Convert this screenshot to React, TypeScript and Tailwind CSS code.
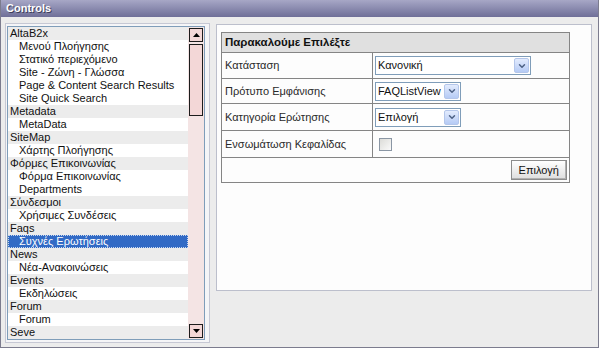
import { ChevronDown } from 'lucide-react'

type Item = { label: string; child?: boolean; selected?: boolean }

const items: Item[] = [
  { label: 'AltaB2x' },
  { label: 'Μενού Πλοήγησης', child: true },
  { label: 'Στατικό περιεχόμενο', child: true },
  { label: 'Site - Ζώνη - Γλώσσα', child: true },
  { label: 'Page & Content Search Results', child: true },
  { label: 'Site Quick Search', child: true },
  { label: 'Metadata' },
  { label: 'MetaData', child: true },
  { label: 'SiteMap' },
  { label: 'Χάρτης Πλοήγησης', child: true },
  { label: 'Φόρμες Επικοινωνίας' },
  { label: 'Φόρμα Επικοινωνίας', child: true },
  { label: 'Departments', child: true },
  { label: 'Σύνδεσμοι' },
  { label: 'Χρήσιμες Συνδέσεις', child: true },
  { label: 'Faqs' },
  { label: 'Συχνές Ερωτήσεις', child: true, selected: true },
  { label: 'News' },
  { label: 'Νέα-Ανακοινώσεις', child: true },
  { label: 'Events' },
  { label: 'Εκδηλώσεις', child: true },
  { label: 'Forum' },
  { label: 'Forum', child: true },
  { label: 'Seve' },
]

function ListRow({ item }: { item: Item }) {
  if (item.selected) {
    return (
      <div className="h-[13px] leading-[13px] bg-[#316ac5] text-white pl-[11px] outline outline-1 outline-dotted outline-offset-[-1px] outline-[#c8d8f0] whitespace-nowrap">
        {item.label}
      </div>
    )
  }
  return (
    <div
      className={
        item.child
          ? 'h-[13px] leading-[13px] bg-white pl-[11px] text-[#111] whitespace-nowrap'
          : 'h-[13px] leading-[13px] bg-[#ececec] pl-[2px] text-[#111] whitespace-nowrap'
      }
    >
      {item.label}
    </div>
  )
}

function ScrollArrow({ up }: { up?: boolean }) {
  return (
    <div className="h-[14px] w-[14px] border border-[#1c1c1c] bg-[#f3d7d7] flex items-center justify-center">
      <svg width="7" height="4" viewBox="0 0 7 4">
        {up ? <path d="M0 4 L3.5 0 L7 4 Z" fill="#000" /> : <path d="M0 0 L3.5 4 L7 0 Z" fill="#000" />}
      </svg>
    </div>
  )
}

function FakeSelect({ value, width }: { value: string; width: string }) {
  return (
    <div className={`${width} h-[19px] border border-[#7f9db9] bg-white flex items-center justify-between pl-[2px] pr-[1px]`}>
      <span className="text-[#111]">{value}</span>
      <div className="w-[15px] h-[15px] rounded-[2px] border border-[#b4c6ea] bg-gradient-to-b from-[#e3ebfd] to-[#b5cbf5] flex items-center justify-center">
        <ChevronDown size={10} strokeWidth={3.5} className="text-[#4d6185]" />
      </div>
    </div>
  )
}

export default function App() {
  return (
    <div className="w-[599px] h-[348px] bg-[#ececec] border-x border-b border-[#7c7c8e] flex flex-col font-['Liberation_Sans',Arial,sans-serif] text-[11px] overflow-hidden">
      {/* Title bar */}
      <div className="h-[17px] shrink-0 bg-gradient-to-b from-[#a7a7c6] to-[#6f6f98] pl-[5px] flex items-center">
        <span className="font-bold text-white text-[11px] [text-shadow:1px_1px_0_#3f3f5c]">Controls</span>
      </div>

      <div className="flex pl-[4px] pt-[6px]">
        {/* Left list */}
        <div className="w-[205px] h-[320px] border border-[#c6c8d4] bg-[#f5f5f7] pl-[1px] pt-[2px]">
          <div className="w-[198px] h-[314px] border border-[#7f9db9] flex bg-white">
            <div className="w-[180px] flex flex-col">
              {items.map((item, i) => (
                <ListRow key={i} item={item} />
              ))}
            </div>
            <div className="w-[16px] bg-[#f4e4e4] flex flex-col pl-[1px] pt-[1px] pb-[1px]">
              <ScrollArrow up />
              <div className="mt-[2px] h-[72px] w-[14px] border border-[#1c1c1c] bg-[#f3d7d7]" />
              <div className="flex-1" />
              <ScrollArrow />
            </div>
          </div>
        </div>

        {/* Right panel */}
        <div className="ml-[6px] mt-[1px] w-[376px] h-[267px] border border-[#bcbfcc] bg-[#fdfdfd] pl-[4px] pt-[7px]">
          <div className="w-[349px] border border-[#858585] flex flex-col text-[#2a2a2a]">
            <div className="h-[20px] bg-[#e0e0e0] border-b border-[#858585] flex items-center pl-[3px] font-bold text-[#111] text-[11.5px]">
              Παρακαλούμε Επιλέξτε
            </div>
            <div className="h-[26px] flex border-b border-[#858585]">
              <div className="w-[151px] border-r border-[#858585] flex items-center pl-[3px]">Κατάσταση</div>
              <div className="flex items-center pl-[2px]">
                <FakeSelect value="Κανονική" width="w-[156px]" />
              </div>
            </div>
            <div className="h-[25px] flex border-b border-[#858585]">
              <div className="w-[151px] border-r border-[#858585] flex items-center pl-[3px]">Πρότυπο Εμφάνισης</div>
              <div className="flex items-center pl-[2px]">
                <FakeSelect value="FAQListView" width="w-[86px]" />
              </div>
            </div>
            <div className="h-[27px] flex border-b border-[#858585]">
              <div className="w-[151px] border-r border-[#858585] flex items-center pl-[3px]">Κατηγορία Ερώτησης</div>
              <div className="flex items-center pl-[2px]">
                <FakeSelect value="Επιλογή" width="w-[86px]" />
              </div>
            </div>
            <div className="h-[27px] flex border-b border-[#858585]">
              <div className="w-[151px] border-r border-[#858585] flex items-center pl-[3px]">Ενσωμάτωση Κεφαλίδας</div>
              <div className="flex items-center pl-[6px]">
                <div className="w-[13px] h-[13px] border border-[#8a96a4] bg-gradient-to-br from-[#dcdcd8] to-[#fafafa]" />
              </div>
            </div>
            <div className="h-[24px] flex items-center justify-end pr-[2px]">
              <button className="h-[20px] px-[7px] border border-[#8c8c8c] bg-gradient-to-b from-white to-[#dedede] text-[#111] text-[11px] shadow-[inset_-1px_-1px_0_#b0b0b0]">
                Επιλογή
              </button>
            </div>
          </div>
        </div>
      </div>
    </div>
  )
}
